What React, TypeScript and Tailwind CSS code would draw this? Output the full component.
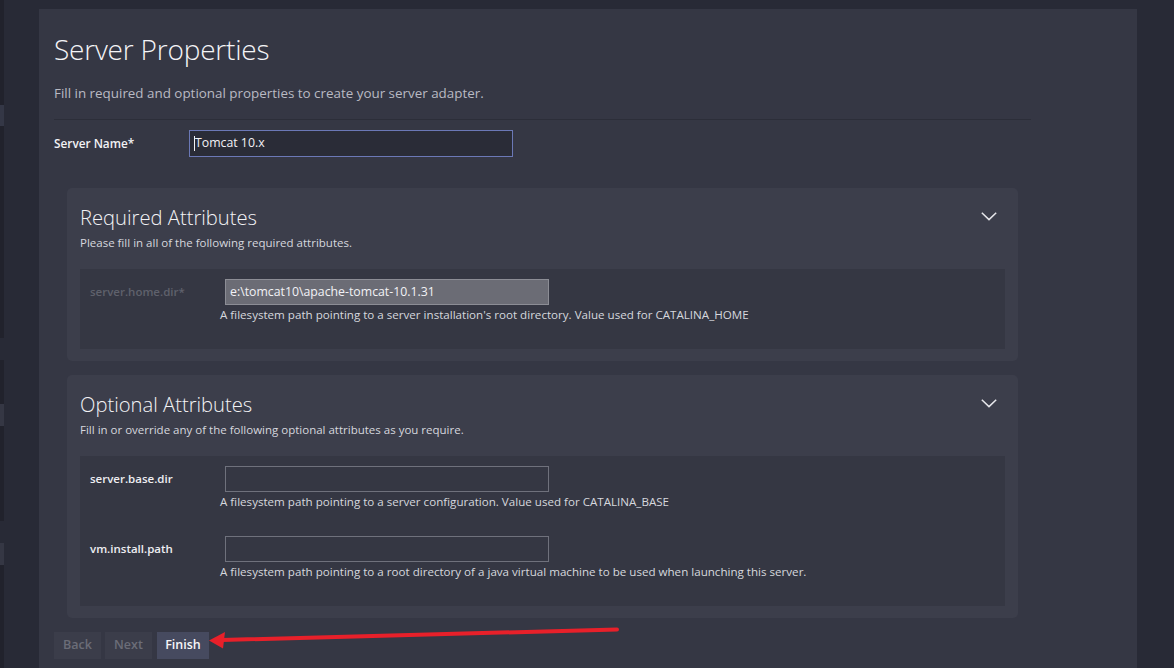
import React from "react";

const font = { fontFamily: '"Open Sans", "Noto Sans", sans-serif' };

function Chevron() {
  return (
    <svg width="16" height="9" viewBox="0 0 16 9" className="mr-[8px] mt-[8px]">
      <path d="M0.8 0.8 L8 7.6 L15.2 0.8" fill="none" stroke="#e6e6ea" strokeWidth="1.5" />
    </svg>
  );
}

function Row({
  label,
  value,
  desc,
  disabled,
}: {
  label: string;
  value?: string;
  desc: string;
  disabled?: boolean;
}) {
  return (
    <div className="flex pb-[25px]">
      <div
        className={`w-[145px] pl-[10px] h-[26px] flex items-center text-[11.5px] font-semibold ${
          disabled ? "text-[#5f616c]" : "text-[#eeeef2]"
        }`}
      >
        {label}
      </div>
      <div className="flex flex-col">
        <div
          className={`w-[324px] h-[26px] border flex items-center px-[4px] text-[12.3px] ${
            disabled
              ? "bg-[#6b6c75] border-[#8c8d95] text-[#f2f2f5]"
              : "bg-[#353743] border-[#6f717c]"
          }`}
        >
          {value}
        </div>
        <div className="-ml-[5px] h-[18px] leading-[18px] mt-[1px] text-[11.6px] text-[#d6d7de] whitespace-nowrap">
          {desc}
        </div>
      </div>
    </div>
  );
}

function Card({
  title,
  subtitle,
  children,
}: {
  title: string;
  subtitle: string;
  children: React.ReactNode;
}) {
  return (
    <div className="ml-[13px] w-[951px] bg-[#3c3e4b] rounded-[5px] px-[13px] pb-[12px] pt-[16px]">
      <div className="flex justify-between">
        <div className="flex flex-col">
          <div className="text-[20.2px] font-light text-[#f3f3f6] leading-[26px]">{title}</div>
          <div className="mt-[5px] text-[11.5px] text-[#d6d7de] leading-[16px]">{subtitle}</div>
        </div>
        <Chevron />
      </div>
      <div className="bg-[#353743] pt-[10px] mt-[18px]">{children}</div>
    </div>
  );
}

function LeftStrip() {
  const segs: [number, string][] = [
    [105, "#21222c"],
    [21, "#343746"],
    [212, "#21222c"],
    [22, "#282a36"],
    [44, "#21222c"],
    [22, "#353744"],
    [95, "#21222c"],
    [22, "#282a36"],
    [22, "#353744"],
    [103, "#21222c"],
  ];
  return (
    <div className="w-[4px] flex flex-col shrink-0">
      {segs.map(([h, c], i) => (
        <div key={i} style={{ height: h, background: c }} />
      ))}
    </div>
  );
}

export default function App() {
  return (
    <div className="relative w-[1174px] h-[668px] overflow-hidden bg-[#282a36] flex" style={font}>
      <LeftStrip />
      <div className="ml-[35px] mt-[9px] w-[1098px] h-[700px] bg-[#353744] px-[15px] pt-[23px]">
        <h1 className="text-[28px] font-light text-[#f4f4f7] leading-[34px] tracking-[-0.2px]">
          Server Properties
        </h1>
        <p className="mt-[17px] text-[13.4px] text-[#b9bac3] leading-[20px]">
          Fill in required and optional properties to create your server adapter.
        </p>
        <div className="mt-[16px] w-[977px] h-px bg-[#2c2e39]" />
        <div className="flex items-center mt-[10px]">
          <div className="w-[135px] text-[11.8px] font-semibold text-[#f2f2f5]">Server Name*</div>
          <div className="w-[324px] h-[27px] bg-[#2a2c37] border border-[#6b78b6] flex items-center px-[4px] text-[12.3px] text-[#f2f2f5]">
            <span className="w-px h-[15px] bg-[#f2f2f5]" />
            Tomcat 10.x
          </div>
        </div>
        <div className="mt-[31px] flex flex-col gap-[14px]">
          <Card title="Required Attributes" subtitle="Please fill in all of the following required attributes.">
            <Row
              label="server.home.dir*"
              value="e:\tomcat10\apache-tomcat-10.1.31"
              desc="A filesystem path pointing to a server installation's root directory. Value used for CATALINA_HOME"
              disabled
            />
          </Card>
          <Card title="Optional Attributes" subtitle="Fill in or override any of the following optional attributes as you require.">
            <Row
              label="server.base.dir"
              desc="A filesystem path pointing to a server configuration. Value used for CATALINA_BASE"
            />
            <Row
              label="vm.install.path"
              desc="A filesystem path pointing to a root directory of a java virtual machine to be used when launching this server."
            />
          </Card>
        </div>
        <div className="flex gap-[4px] mt-[14px] text-[12.5px] font-semibold">
          <div className="w-[47px] h-[27px] bg-[#3b3d4a] text-[#6b6d78] flex items-center justify-center">Back</div>
          <div className="w-[47px] h-[27px] bg-[#3b3d4a] text-[#6b6d78] flex items-center justify-center">Next</div>
          <div className="ml-[1px] w-[52px] h-[27px] bg-[#464a5f] text-[#f6f6f8] flex items-center justify-center">Finish</div>
        </div>
      </div>
      <svg className="absolute left-0 top-0 pointer-events-none" width="1174" height="668">
        <line x1="617" y1="629.5" x2="222" y2="640" stroke="#e8202a" strokeWidth="4" strokeLinecap="round" />
        <polygon points="209,640.5 225,632 223,648.5" fill="#e8202a" />
      </svg>
    </div>
  );
}
